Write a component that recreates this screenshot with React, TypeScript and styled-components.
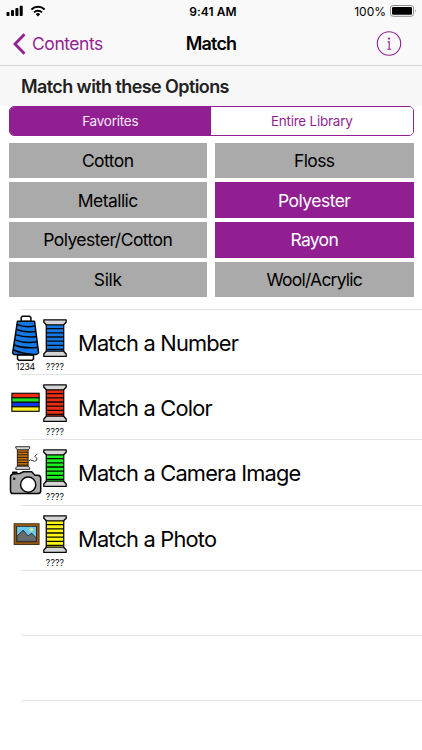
import React from "react";
import styled, { createGlobalStyle } from "styled-components";

const PURPLE = "#921f92";

const GlobalStyle = createGlobalStyle`
  *, *::before, *::after { box-sizing: border-box; }
  body {
    margin: 0;
    background: #fff;
    color: #000;
    font-family: Inter, "Liberation Sans", sans-serif;
    overflow: hidden;
  }
  button { font: inherit; padding: 0; margin: 0; border: 0; background: none; }
  svg { display: block; flex: none; }
`;

const Screen = styled.main`
  width: 422px;
  height: 750px;
  overflow: hidden;
  display: flex;
  flex-direction: column;

  > * { flex-shrink: 0; }
`;

const TopBars = styled.header`
  height: 66px;
  background: #f9f9f9;
  border-bottom: 1px solid #d2d2d2;
`;

const ThreeColumns = styled.div`
  display: grid;
  grid-template-columns: 1fr auto 1fr;
  align-items: center;
`;

const StatusBar = styled(ThreeColumns)`
  height: 22px;
  padding: 0 5px 0 6px;
  font-size: 12px;
`;

const Signals = styled.div`
  display: flex;
  align-items: center;
  gap: 7px;
`;

const Battery = styled.div`
  display: flex;
  align-items: center;
  justify-content: flex-end;
  gap: 4px;
`;

const Clock = styled.span`
  font-weight: 600;
  letter-spacing: 0.08px;
  padding-left: 3px;
`;

const NavBar = styled(ThreeColumns)`
  height: 43px;
  padding: 0 20px 0 13px;
`;

const BackButton = styled.button`
  display: flex;
  align-items: center;
  gap: 6px;
  color: ${PURPLE};
  font-size: 17.5px;
  letter-spacing: -0.45px;
`;

const NavTitle = styled.h1`
  margin: 0;
  padding-left: 7px;
  font-size: 18px;
  font-weight: 600;
  letter-spacing: -0.8px;
`;

const InfoButton = styled.button`
  justify-self: end;
`;

const SectionTitle = styled.h2`
  margin: 0;
  height: 40px;
  padding: 1px 0 0 21px;
  display: flex;
  align-items: center;
  background: #f7f7f7;
  color: #222;
  font-size: 18px;
  font-weight: 600;
  letter-spacing: -0.59px;
`;

const Filters = styled.section`
  height: 203px;
  padding: 0 8.5px;
`;

const Segments = styled.div`
  display: grid;
  grid-template-columns: 1fr 1fr;
  height: 30px;
  border: 1px solid ${PURPLE};
  border-radius: 5px;
  overflow: hidden;
`;

const Segment = styled.button<{ $active?: boolean }>`
  background: ${(p) => (p.$active ? PURPLE : "#fff")};
  color: ${(p) => (p.$active ? "#f7e9f7" : PURPLE)};
  font-size: 13.5px;
  letter-spacing: -0.24px;
`;

const FiberGrid = styled.div`
  display: grid;
  grid-template-columns: 1fr 1fr;
  grid-auto-rows: 35.7px;
  gap: 4px 8px;
  margin-top: 6.7px;
`;

const Fiber = styled.button<{ $selected?: boolean; $tracking?: number }>`
  background: ${(p) => (p.$selected ? PURPLE : "#aaa")};
  color: ${(p) => (p.$selected ? "#fff" : "#000")};
  font-size: 17.5px;
  letter-spacing: ${(p) => p.$tracking ?? -0.54}px;
`;

const MatchList = styled.ul`
  margin: 0;
  padding: 0;
  list-style: none;
`;

const MatchRow = styled.li`
  display: flex;
  height: 65.2px;
  padding-left: 9px;
  background: linear-gradient(#e3e3e5, #e3e3e5) 21px 0 / 401px 1px no-repeat;
`;

const Glyph = styled.div<{ $width: number }>`
  width: ${(p) => p.$width}px;
  display: flex;
  flex-direction: column;
  align-items: center;
`;

const Caption = styled.span<{ $tracking?: number }>`
  height: 12px;
  line-height: 12px;
  font-size: 8.7px;
  letter-spacing: ${(p) => p.$tracking ?? -0.25}px;
`;

const MatchLabel = styled.span`
  margin-left: 10px;
  padding-top: 3px;
  align-self: center;
  font-size: 21.8px;
  letter-spacing: -0.8px;
`;

function SpoolShape({ color }: { color: string }) {
  return (
    <g stroke="#080808" strokeWidth="1.3" strokeLinejoin="round">
      <path d="M3.3 4.5h17.4v29H3.3z" fill={color} />
      <path d="M3.3 9.6h17.4M3.3 13.8h17.4M3.3 18h17.4M3.3 22.2h17.4M3.3 26.4h17.4M3.3 30.4h17.4" />
      <path d="M.8.8h22.4v2.4l-2.6 2.6H3.4L.8 3.2z" fill="#d5d5d5" />
      <path d="M.8 37.4h22.4V35l-2.6-2.8H3.4L.8 35z" fill="#d5d5d5" />
    </g>
  );
}

function SpoolIcon({ color }: { color: string }) {
  return (
    <svg width="26" height="52" viewBox="-1 -10 26 52">
      <SpoolShape color={color} />
    </svg>
  );
}

function ConeIcon() {
  return (
    <svg width="33" height="52" viewBox="0 0 33 52">
      <g stroke="#050505" strokeWidth="1.5" strokeLinejoin="round">
        <path d="M12.2 12.5V8.6l1.2-1.3h7.2l1.3 1.3v3.9z" fill="#fff" />
        <path d="M8.5 46h16v4l-1.3 1.2H9.8L8.5 50z" fill="#fff" />
        <path d="M8.5 12.2h17l4.1 31.6-2.2 1.7H5L3.6 44z" fill="#1678e5" />
        <path
          d="M7.8 15.4q8 3.6 18 1.7M7.2 20.4q8 3.4 19.2 2.2M6.4 25.6q9 3.2 20.7 2.2M5.7 30.9q10 3.8 22 2.2M5 36q10 4 23.4 2.4M4.3 40.8q9 4.2 19 4.6"
          fill="none"
        />
      </g>
    </svg>
  );
}

function SwatchIcon() {
  const bands = ["#f02b12", "#20e21d", "#0d36ed", "#fff22a"];
  return (
    <svg width="33" height="52" viewBox="0 0 33 52">
      <g stroke="#111" strokeWidth="1.2">
        {bands.map((fill, i) => (
          <rect key={fill} x="2.9" y={19.3 + i * 4.5} width="27.2" height="4.5" fill={fill} />
        ))}
      </g>
    </svg>
  );
}

function CameraIcon() {
  return (
    <svg width="33" height="60" viewBox="0 0 33 60">
      <g transform="translate(6.3 7.2) scale(.62)">
        <SpoolShape color="#c77612" />
      </g>
      <path
        d="M19.5 22q1.8-2 3.5-.5 3.3 1.7 4.7-.4.9-2-1-2.8-2-.8.5-2.6l1.2-.8"
        fill="none"
        stroke="#222"
        strokeWidth=".9"
      />
      <g stroke="#080808" strokeWidth="1.5" strokeLinejoin="round">
        <path d="M3.8 35v-1.8h4V35" fill="#aaa" />
        <path
          d="M1.5 38.2q0-2.8 2.8-3.1l6.5-.6 2.6-1.2 1.3-.6h8l3.2 3.5h3q2.8.3 2.8 3v12.9q0 2.5-2.7 2.5H4.2q-2.7 0-2.7-2.6z"
          fill="#aaa"
        />
        <circle cx="19.2" cy="45.7" r="7.6" fill="#fff" />
      </g>
      <circle cx="5.2" cy="39.8" r="1.3" fill="#111" />
    </svg>
  );
}

function PhotoIcon() {
  return (
    <svg width="33" height="52" viewBox="0 0 33 52">
      <rect x="6.4" y="20" width="22.4" height="18.2" fill="#69c8f2" stroke="#21170a" strokeWidth="3.4" />
      <rect x="6.4" y="20" width="22.4" height="18.2" fill="none" stroke="#9a5811" strokeWidth="1.9" />
      <path d="M8 34.8v-3.6l6.1-6.1 5 5.9 3.5-2.8 4.8 5v3.2H8z" fill="#666a6d" stroke="#2d3134" />
      <path d="M22.4 22.4v4.4M20.2 24.6h4.4M20.9 23.1l3 3M23.9 23.1l-3 3" stroke="#e8f476" strokeWidth=".8" />
    </svg>
  );
}

const fibers = [
  { name: "Cotton" },
  { name: "Floss", tracking: -0.6 },
  { name: "Metallic" },
  { name: "Polyester", selected: true },
  { name: "Polyester/Cotton" },
  { name: "Rayon", selected: true, tracking: -0.7 },
  { name: "Silk", tracking: -0.35 },
  { name: "Wool/Acrylic", tracking: -0.78 },
];

const matches = [
  { label: "Match a Number", color: "#1678e5", icon: <ConeIcon />, caption: "1234" },
  { label: "Match a Color", color: "#ee2c13", icon: <SwatchIcon /> },
  { label: "Match a Camera Image", color: "#19f51c", icon: <CameraIcon /> },
  { label: "Match a Photo", color: "#fff713", icon: <PhotoIcon /> },
];

export default function App() {
  return (
    <Screen>
      <GlobalStyle />
      <TopBars>
        <StatusBar>
          <Signals>
            <svg width="17" height="12" viewBox="0 0 17 12">
              <rect x=".5" y="7" width="3" height="4" rx=".8" />
              <rect x="5" y="5" width="3" height="6" rx=".8" />
              <rect x="9.4" y="3" width="3" height="8" rx=".8" />
              <rect x="13.7" y=".8" width="3" height="10.2" rx=".8" />
            </svg>
            <svg width="16" height="12" viewBox="0 0 16 12">
              <path d="M1.4 4.5a9.5 9.5 0 0 1 13.2 0" fill="none" stroke="#000" strokeWidth="2" />
              <path d="M4 7.4a5.8 5.8 0 0 1 8 0" fill="none" stroke="#000" strokeWidth="1.9" />
              <path d="m8 11.5-2.2-2.3a3.1 3.1 0 0 1 4.4 0z" />
            </svg>
          </Signals>
          <Clock>9:41 AM</Clock>
          <Battery>
            <span>100%</span>
            <svg width="27" height="12" viewBox="0 0 27 12">
              <rect x=".5" y=".5" width="23" height="10.8" rx="2.6" fill="none" stroke="#8c8c8c" />
              <rect x="2" y="2" width="20" height="7.8" rx="1.3" />
              <path d="M25 4q1.5 1.9 0 3.8z" fill="#888" />
            </svg>
          </Battery>
        </StatusBar>
        <NavBar>
          <BackButton>
            <svg width="13" height="22" viewBox="0 0 13 22">
              <path d="M11.5 1.3 2 11l9.5 9.7" fill="none" stroke={PURPLE} strokeWidth="2.8" />
            </svg>
            Contents
          </BackButton>
          <NavTitle>Match</NavTitle>
          <InfoButton aria-label="Info">
            <svg width="26" height="26" viewBox="0 0 26 26">
              <circle cx="13" cy="12.5" r="11.7" fill="none" stroke={PURPLE} strokeWidth="1.1" />
              <circle cx="13" cy="7.6" r="1.1" fill={PURPLE} />
              <path d="M11.6 10.9h1.6v7.3M11.3 18.2h3.8" fill="none" stroke={PURPLE} strokeWidth="1.1" />
            </svg>
          </InfoButton>
        </NavBar>
      </TopBars>
      <SectionTitle>Match with these Options</SectionTitle>
      <Filters>
        <Segments>
          <Segment $active>Favorites</Segment>
          <Segment>Entire Library</Segment>
        </Segments>
        <FiberGrid>
          {fibers.map((f) => (
            <Fiber key={f.name} $selected={f.selected} $tracking={f.tracking}>
              {f.name}
            </Fiber>
          ))}
        </FiberGrid>
      </Filters>
      <MatchList>
        {matches.map((m) => (
          <MatchRow key={m.label}>
            <Glyph $width={33}>
              {m.icon}
              {m.caption && <Caption>{m.caption}</Caption>}
            </Glyph>
            <Glyph $width={26}>
              <SpoolIcon color={m.color} />
              <Caption $tracking={0.15}>????</Caption>
            </Glyph>
            <MatchLabel>{m.label}</MatchLabel>
          </MatchRow>
        ))}
        <MatchRow />
        <MatchRow />
        <MatchRow />
      </MatchList>
    </Screen>
  );
}
